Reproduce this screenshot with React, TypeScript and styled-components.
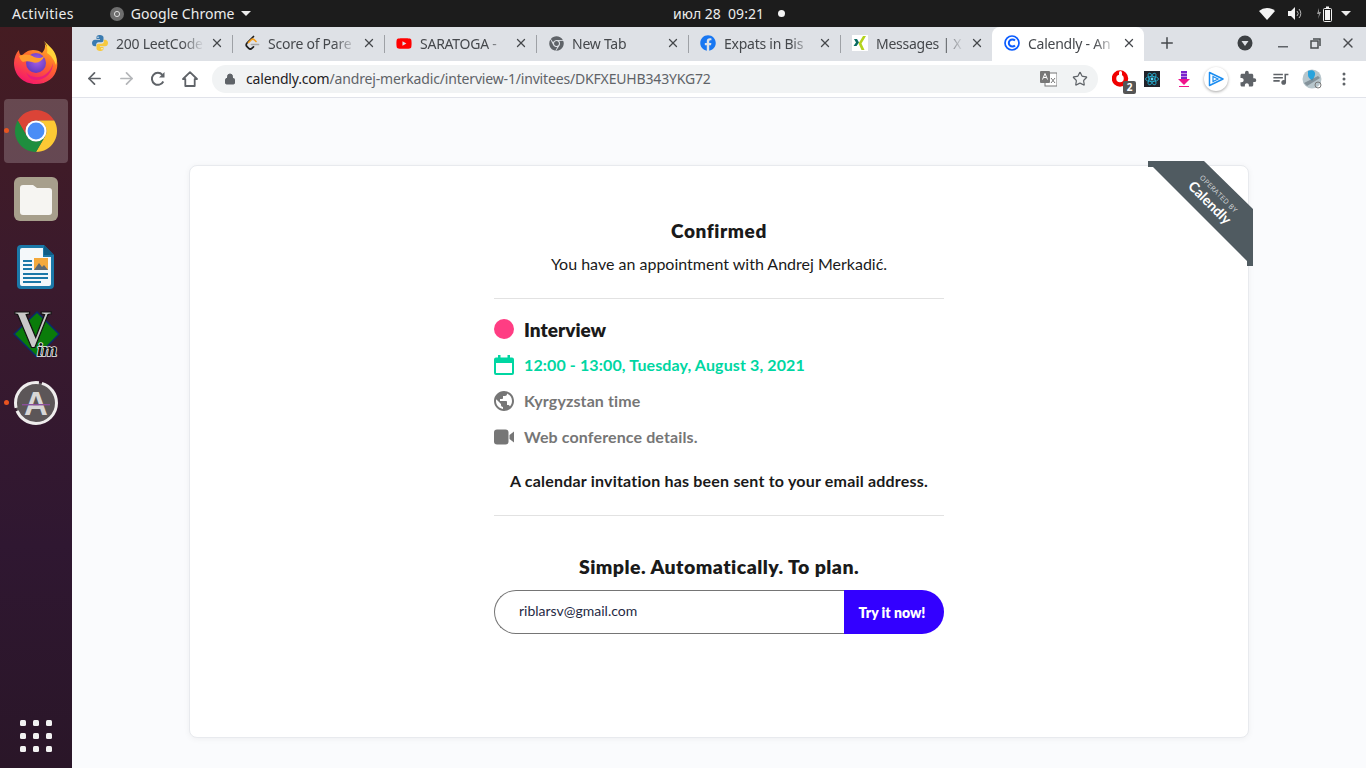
import styled, { createGlobalStyle } from "styled-components";
import { ArrowLeft, ArrowRight, Lock, Star, X, Plus } from "lucide-react";
import { FaFacebook, FaYoutube, FaChrome } from "react-icons/fa";
import { MdExtension, MdPublic, MdQueueMusic } from "react-icons/md";

const GlobalStyle = createGlobalStyle`
  html, body {
    margin: 0;
    padding: 0;
    height: 100%;
    overflow: hidden;
    background: #fafbfd;
  }
  * { box-sizing: border-box; }
`;

const Screen = styled.div`
  width: 1366px;
  height: 768px;
  display: flex;
  flex-direction: column;
  font-family: "Noto Sans", sans-serif;
`;

const TopBar = styled.div`
  height: 27px;
  flex: none;
  background: #1c1c1c;
  color: #ececec;
  font-size: 14px;
  display: grid;
  grid-template-columns: 1fr auto 1fr;
  align-items: center;
  padding: 0 15px 0 12px;
`;

const TopLeft = styled.div`
  display: flex;
  align-items: center;
  letter-spacing: 0.02px;
`;

const Activities = styled.span`
  letter-spacing: 0.35px;
`;

const AppMenu = styled.div`
  display: flex;
  align-items: center;
  gap: 7px;
  margin-left: 36px;
`;

const Caret = styled.span`
  width: 0;
  height: 0;
  border-left: 5px solid transparent;
  border-right: 5px solid transparent;
  border-top: 5px solid #ececec;
`;

const TrayCaret = styled(Caret)`
  margin-left: -5px;
`;

const Clock = styled.div`
  display: flex;
  align-items: center;
  gap: 14px;
  margin-left: 95px;
`;

const Dot = styled.span`
  width: 7px;
  height: 7px;
  border-radius: 50%;
  background: #f4f4f4;
`;

const Tray = styled.div`
  display: flex;
  align-items: center;
  justify-content: flex-end;
  gap: 13px;
`;

const Main = styled.div`
  flex: 1;
  display: flex;
  min-height: 0;
`;

const Dock = styled.div`
  width: 72px;
  flex: none;
  background: linear-gradient(180deg, #451c22 0%, #3a1a2d 35%, #2f1731 70%, #2a1628 100%);
  display: flex;
  flex-direction: column;
  padding-top: 2px;
`;

const DockSlot = styled.div<{ $active?: boolean; $running?: boolean; $lift?: boolean }>`
  height: 68px;
  flex: none;
  margin: 0 4px;
  border-radius: 4px;
  display: flex;
  align-items: center;
  justify-content: center;
  position: relative;
  background: ${(p) => (p.$active ? "rgba(255,255,255,0.2)" : "transparent")};
  ${(p) => (p.$active ? "height: 64px; margin: 2px 4px;" : "")}
  ${(p) => (p.$lift ? "padding-bottom: 2px;" : "")}
  &::before {
    content: "";
    display: ${(p) => (p.$running ? "block" : "none")};
    position: absolute;
    left: 0;
    top: 50%;
    margin-top: -3px;
    width: 5px;
    height: 5px;
    border-radius: 50%;
    background: #e95420;
  }
`;

const AppGrid = styled.div`
  margin: auto 0 16px 20px;
  width: 32px;
  display: grid;
  grid-template-columns: repeat(3, 6px);
  grid-auto-rows: 6px;
  gap: 7px;
`;

const GridDot = styled.span`
  background: #f2f2f2;
  border-radius: 1.5px;
`;

const Browser = styled.div`
  flex: 1;
  min-width: 0;
  display: flex;
  flex-direction: column;
`;

const TabStrip = styled.div`
  height: 34px;
  flex: none;
  background: #dee1e6;
  display: flex;
  align-items: stretch;
  padding-left: 8px;
  color: #45484c;
`;

const Tab = styled.div<{ $active?: boolean; $last?: boolean }>`
  width: 152px;
  flex: none;
  display: flex;
  align-items: center;
  padding: 0 8px 2px 12px;
  gap: 8px;
  font-size: 14px;
  position: relative;
  background: ${(p) => (p.$active ? "#fff" : "transparent")};
  border-radius: ${(p) => (p.$active ? "8px 8px 0 0" : "0")};
  &::after {
    content: "";
    display: ${(p) => (p.$active || p.$last ? "none" : "block")};
    position: absolute;
    right: -1px;
    top: 8px;
    bottom: 8px;
    width: 1px;
    background: #9ea1a6;
  }
`;

const TabIcon = styled.span`
  width: 16px;
  height: 16px;
  flex: none;
  display: flex;
  align-items: center;
  justify-content: center;
`;

const TabTitle = styled.span`
  flex: 1;
  min-width: 0;
  margin-right: -6px;
  white-space: nowrap;
  overflow: hidden;
  letter-spacing: -0.25px;
  mask-image: linear-gradient(90deg, #000 72%, transparent 96%);
`;

const NewTab = styled.span`
  width: 46px;
  flex: none;
  display: flex;
  align-items: center;
  justify-content: center;
  padding-bottom: 2px;
`;

const WindowControls = styled.div`
  margin-left: auto;
  display: flex;
  align-items: center;
  padding-bottom: 2px;
`;

const WindowButton = styled.span<{ $w: number }>`
  width: ${(p) => p.$w}px;
  display: flex;
  align-items: center;
  justify-content: center;
`;

const Toolbar = styled.div`
  height: 37px;
  flex: none;
  background: #fff;
  border-bottom: 1px solid #e1e3ea;
  display: flex;
  align-items: center;
  padding: 0 0 1px 6px;
  color: #5f6368;
`;

const NavButton = styled.span<{ $muted?: boolean }>`
  width: 32px;
  display: flex;
  align-items: center;
  justify-content: center;
  color: ${(p) => (p.$muted ? "#b4b6b9" : "#5f6368")};
`;

const Omnibox = styled.div`
  width: 886px;
  height: 28px;
  margin-left: 6px;
  border-radius: 14px;
  background: #f1f3f4;
  display: flex;
  align-items: center;
  padding: 0 2px 0 12px;
  font-size: 14px;
`;

const Url = styled.span`
  margin-left: 10px;
  flex: 1;
  color: #5f6368;
  letter-spacing: -0.17px;
  white-space: nowrap;
  strong {
    font-weight: 400;
    color: #1f2124;
  }
`;

const OmniAction = styled.span`
  width: 32px;
  display: flex;
  align-items: center;
  justify-content: center;
`;

const Extensions = styled.div`
  display: flex;
  align-items: center;
  margin-left: 6px;
`;

const Extension = styled.span`
  width: 32px;
  height: 28px;
  display: flex;
  align-items: center;
  justify-content: center;
  position: relative;
`;

const CountBadge = styled.span`
  position: absolute;
  right: 0;
  bottom: -1px;
  width: 13px;
  height: 13px;
  background: #555;
  border-radius: 2px;
  color: #fff;
  font-size: 10px;
  font-weight: 700;
  line-height: 13px;
  text-align: center;
`;

const Page = styled.div`
  flex: 1;
  min-height: 0;
  background: #fafbfd;
  padding: 67px 117px 0;
`;

const Card = styled.div`
  position: relative;
  height: 573px;
  background: #fff;
  border: 1px solid #e8eaee;
  border-radius: 8px;
  box-shadow: 0 1px 6px rgba(0, 0, 0, 0.05);
  padding-top: 53px;
  font-family: "Lato", sans-serif;
  color: #1a1a1a;
`;

const Ribbon = styled.div`
  position: absolute;
  top: -5px;
  right: -5px;
  width: 105px;
  height: 105px;
`;

const RibbonBand = styled.div`
  position: absolute;
  inset: 0;
  background: #505b61;
  clip-path: polygon(0 0, 56px 0, 105px 48px, 105px 105px, 99px 105px, 99px 100px, 5px 6px, 0 6px);
`;

const RibbonLabel = styled.div`
  position: absolute;
  left: 23px;
  top: 27px;
  width: 84px;
  color: #fff;
  transform: rotate(45deg);
  text-align: center;
  line-height: 1;
`;

const RibbonSmall = styled.div`
  font-size: 7px;
  letter-spacing: 0.4px;
  color: #d5d8da;
  font-family: "Open Sans", sans-serif;
  margin-bottom: 2px;
`;

const RibbonBrand = styled.div`
  font-size: 14px;
  font-weight: 700;
`;

const Column = styled.div`
  width: 450px;
  margin: 0 auto;
`;

const Title = styled.h1`
  margin: 0;
  font-size: 19px;
  font-weight: 800;
  line-height: 24px;
  letter-spacing: 0.6px;
  text-align: center;
  color: #1a1a1a;
`;

const Subtitle = styled.p`
  margin: 9px 0 22px;
  font-size: 16px;
  line-height: 24px;
  text-align: center;
`;

const Divider = styled.hr`
  margin: 0;
  border: 0;
  height: 1px;
  background: #e2e2e2;
`;

const Details = styled.div`
  padding-top: 13px;
`;

const DetailRow = styled.div<{ $color?: string; $big?: boolean }>`
  height: 36px;
  display: flex;
  align-items: center;
  gap: 10px;
  padding-bottom: 2px;
  font-size: ${(p) => (p.$big ? "19px" : "16px")};
  font-weight: ${(p) => (p.$big ? 800 : 700)};
  letter-spacing: ${(p) => (p.$big ? "0" : "0.12px")};
  color: ${(p) => p.$color || "#767676"};
  svg {
    flex: none;
  }
`;

const RowText = styled.span<{ $lift?: boolean }>`
  margin-top: ${(p) => (p.$lift ? "-2px" : "0")};
`;

const IconCell = styled.span`
  width: 20px;
  height: 20px;
  flex: none;
  display: flex;
  align-items: center;
  justify-content: center;
`;

const EventDot = styled.span`
  width: 20px;
  height: 20px;
  border-radius: 50%;
  background: #ff3d83;
`;

const Notice = styled.p`
  margin: 13px 0 22px;
  font-size: 16px;
  font-weight: 700;
  line-height: 24px;
  letter-spacing: 0.2px;
  text-align: center;
  color: #1a1a1a;
`;

const Promo = styled.h2`
  margin: 39px 0 11px;
  font-size: 19.5px;
  font-weight: 800;
  line-height: 24px;
  letter-spacing: 0.45px;
  text-align: center;
  color: #1a1a1a;
`;

const SignupForm = styled.form`
  height: 44px;
  display: flex;
`;

const EmailInput = styled.input`
  flex: 1;
  min-width: 0;
  border: 1px solid #757575;
  border-right: 0;
  border-radius: 22px 0 0 22px;
  padding: 0 0 4px 24px;
  font-family: "Lato", sans-serif;
  font-size: 14px;
  color: #1f2a44;
  outline: none;
`;

const TryButton = styled.button`
  width: 100px;
  border: 0;
  border-radius: 0 22px 22px 0;
  padding: 0 4px 0 0;
  background: #3300ff;
  color: #fff;
  font-family: "Lato", sans-serif;
  font-size: 14px;
  font-weight: 800;
`;

const Firefox = () => (
  <svg width="46" height="46" viewBox="0 0 46 46">
    <defs>
      <linearGradient id="ffBody" x1="0.8" y1="0" x2="0.3" y2="1">
        <stop offset="0" stopColor="#ffc328" />
        <stop offset="0.45" stopColor="#ff6a2b" />
        <stop offset="1" stopColor="#f5156c" />
      </linearGradient>
      <radialGradient id="ffEye" cx="0.55" cy="0.4" r="0.7">
        <stop offset="0" stopColor="#a560e8" />
        <stop offset="1" stopColor="#5a33b8" />
      </radialGradient>
    </defs>
    <path d="M31 2c1 5 6 8 9 12 4 5 5 10 4 15-2 10-10 16-21 16C10 45 1 36 1 24c0-5 2-10 5-13 0 3 1 5 3 6 2-3 6-6 11-6 4 0 7 1 9 3 3-3 4-7 2-12z" fill="url(#ffBody)" />
    <path d="M31 2c4 4 10 8 12 15 1 3 1 6 0 9-2-5-5-10-9-12 1-4 0-8-3-12z" fill="#ffd43a" />
    <circle cx="23" cy="24" r="10" fill="url(#ffEye)" />
    <path d="M6 17c5-2 10-2 15 1 4 2 8 1 10-1-1 5-7 8-12 6-3-1-7-1-9 0-2-1-3-3-4-6z" fill="#ff9c2e" />
    <path d="M13 33c4 6 14 7 20 2 4-3 6-7 7-11 0 9-7 17-17 17-5 0-8-3-10-8z" fill="#e31587" opacity="0.75" />
  </svg>
);

const ChromeLogo = () => (
  <svg width="46" height="46" viewBox="0 0 48 48">
    <path d="M5 13A22 22 0 0 1 43 13H24A11 11 0 0 0 14.5 29.5Z" fill="#db4437" />
    <path d="M43 13A22 22 0 0 1 24 46L33.5 29.5A11 11 0 0 0 24 13Z" fill="#fcc934" />
    <path d="M24 46A22 22 0 0 1 5 13L14.5 29.5A11 11 0 0 0 33.5 29.5Z" fill="#1e8e3e" />
    <circle cx="24" cy="24" r="11" fill="#fff" />
    <circle cx="24" cy="24" r="8.8" fill="#4a8df6" />
  </svg>
);

const FilesLogo = () => (
  <svg width="46" height="46" viewBox="0 0 46 46">
    <rect x="1" y="1" width="44" height="44" rx="6" fill="#a79f8c" />
    <path d="M7 12a3 3 0 0 1 3-3h10l4 3h12a3 3 0 0 1 3 3v21a3 3 0 0 1-3 3H10a3 3 0 0 1-3-3z" fill="#f6f5f2" />
  </svg>
);

const WriterLogo = () => (
  <svg width="38" height="46" viewBox="0 0 38 46">
    <path d="M4 1h23l10 10v30a4 4 0 0 1-4 4H4a4 4 0 0 1-4-4V5a4 4 0 0 1 4-4z" fill="#1b78a8" />
    <path d="M5 4h21v9h8v27a2 2 0 0 1-2 2H5a2 2 0 0 1-2-2V6a2 2 0 0 1 2-2z" fill="#f4f8fa" />
    <path d="M27 1l10 10H27z" fill="#0f5d86" />
    <rect x="6" y="16" width="9" height="2" fill="#1b78a8" />
    <rect x="6" y="20" width="9" height="2" fill="#1b78a8" />
    <rect x="6" y="24" width="9" height="2" fill="#1b78a8" />
    <rect x="6" y="29" width="25" height="2" fill="#1b78a8" />
    <rect x="6" y="33" width="25" height="2" fill="#1b78a8" />
    <rect x="6" y="37" width="18" height="2" fill="#1b78a8" />
    <rect x="17" y="14" width="14" height="12" fill="#f3a93c" />
    <path d="M17 26l5-7 3 4 2-2 4 5z" fill="#5d6a73" />
  </svg>
);

const VimLogo = () => (
  <svg width="48" height="48" viewBox="0 0 48 48" overflow="visible">
    <path d="M25 1l22 22-22 23L2 23z" fill="#0a7c0a" stroke="#0b2a6b" strokeWidth="1.5" />
    <text x="21" y="36" textAnchor="middle" fontFamily="Liberation Serif, serif" fontWeight="700" fontSize="52" fill="#c9c9c9" stroke="#111" strokeWidth="1.2">V</text>
    <text x="35" y="45" textAnchor="middle" fontFamily="Liberation Serif, serif" fontStyle="italic" fontWeight="700" fontSize="19" fill="#111" stroke="#eee" strokeWidth="1.6" paintOrder="stroke">im</text>
  </svg>
);

const SoftwareLogo = () => (
  <svg width="46" height="46" viewBox="0 0 46 46">
    <circle cx="23" cy="23" r="20.500" fill="#5c5658" />
    <circle cx="23" cy="23" r="20.500" fill="none" stroke="#efeded" strokeWidth="3" strokeDasharray="56 3 40 3 26 1" />
    <text x="23" y="35" textAnchor="middle" fontFamily="Liberation Sans, sans-serif" fontWeight="700" fontSize="33" fill="#d8d6d6">A</text>
    <rect x="9" y="24" width="28" height="1.400" fill="#8a4f9c" />
  </svg>
);

const CalendarIcon = () => (
  <svg width="20" height="20" viewBox="0 0 20 20">
    <path d="M4 0h2.500v2.500h7V0H16v2.500h2a2 2 0 0 1 2 2V18a2 2 0 0 1-2 2H2a2 2 0 0 1-2-2V4.500a2 2 0 0 1 2-2h2zM2 8v10h16V8z" fill="#00d6a2" />
  </svg>
);

const VideoIcon = () => (
  <svg width="20" height="16" viewBox="0 0 20 16">
    <rect x="0" y="0.500" width="14.500" height="15" rx="3" fill="#767676" />
    <path d="M15.500 6l4.500-3.500v11L15.500 10z" fill="#767676" />
  </svg>
);

const CalendlyFavicon = () => (
  <svg width="16" height="16" viewBox="0 0 16 16" fill="none">
    <circle cx="8" cy="8" r="7" stroke="#0a5cff" strokeWidth="1.700" />
    <path d="M11 5.500a3.600 3.600 0 1 0 0 5" stroke="#0a5cff" strokeWidth="2" />
  </svg>
);

const PythonFavicon = () => (
  <svg width="16" height="16" viewBox="0 0 16 16">
    <path d="M8 0C5 0 4.500 1.200 4.500 2.500V4H8v.7H3C1.200 4.700 0 6 0 8s1.200 3.300 3 3.300h1.200V9.500c0-1.300 1-2.300 2.300-2.300h3c1.200 0 2-.9 2-2V2.500C11.500 1 10 0 8 0z" fill="#3b7bb0" />
    <path d="M8 16c3 0 3.500-1.200 3.500-2.500V12H8v-.7h5c1.800 0 3-1.300 3-3.300s-1.200-3.300-3-3.300h-1.200v1.800c0 1.300-1 2.300-2.300 2.300h-3c-1.200 0-2 .9-2 2v2.700C4.500 15 6 16 8 16z" fill="#f7c93e" />
    <circle cx="6" cy="2.200" r="0.700" fill="#fff" />
    <circle cx="10" cy="13.800" r="0.700" fill="#fff" />
  </svg>
);

const LeetcodeFavicon = () => (
  <svg width="16" height="16" viewBox="0 0 16 16" fill="none" strokeWidth="1.700" strokeLinecap="round">
    <path d="M9.500 1.500L3 8c-1 1.200-1 2.600 0 3.600l1.500 1.500c1 1 2.600 1 3.600 0l1.400-1.300" stroke="#1f1f1f" />
    <path d="M4.500 7.500L7 5c1-1 2.500-1 3.500 0l1.500 1.500" stroke="#f89f1b" />
    <path d="M7.500 9.500h7" stroke="#a8a8a8" />
  </svg>
);

const XingFavicon = () => (
  <svg width="16" height="16" viewBox="0 0 16 16">
    <rect width="16" height="16" fill="#fff" />
    <path d="M2 4h3l2 3.500L4.500 11h-3L4 7.500z" fill="#0a6b62" />
    <path d="M11 1h3L9.500 8.500 12.500 15h-3L6.500 8.500z" fill="#b4d31e" />
  </svg>
);

const Wifi = () => (
  <svg width="16" height="13" viewBox="0 0 16 13">
    <path d="M0 4a12 12 0 0 1 16 0l-8 9z" fill="#f4f4f4" />
  </svg>
);

const Volume = () => (
  <svg width="15" height="13" viewBox="0 0 15 13" fill="none">
    <path d="M0 4h3l4-4v13l-4-4H0z" fill="#f4f4f4" />
    <path d="M9 4a3.500 3.500 0 0 1 0 5M11 2a6.500 6.500 0 0 1 0 9" stroke="#b8b8b8" />
  </svg>
);

const Battery = () => (
  <svg width="17" height="16" viewBox="0 0 17 16" fill="none">
    <path d="M3 2L1 8h2l-1 5 3-7H3z" fill="#999" />
    <rect x="7.500" y="2.500" width="8" height="13" rx="1" stroke="#f4f4f4" />
    <rect x="9" y="4" width="5" height="10" fill="#f4f4f4" />
    <rect x="10" y="0.500" width="3" height="2" fill="#f4f4f4" />
  </svg>
);

const Indicator = () => (
  <svg width="14" height="14" viewBox="0 0 14 14">
    <circle cx="7" cy="7" r="7" fill="#6e6e6e" />
    <circle cx="7" cy="7" r="2.600" fill="none" stroke="#dcdcdc" />
  </svg>
);

const ReloadIcon = () => (
  <svg width="18" height="18" viewBox="0 0 18 18" fill="none">
    <path d="M14.300 11.500A6 6 0 1 1 13.400 4.800" stroke="#5f6368" strokeWidth="2" />
    <path d="M15.500 2v5.500H10z" fill="#5f6368" />
  </svg>
);

const HomeIcon = () => (
  <svg width="18" height="18" viewBox="0 0 18 18" fill="none">
    <path d="M9 2.200L2 9h2.300v7h9.400V9H16z" stroke="#5f6368" strokeWidth="1.800" strokeLinejoin="round" />
  </svg>
);

const TranslateIcon = () => (
  <svg width="17" height="16" viewBox="0 0 17 16">
    <rect x="5" y="2" width="12" height="13" fill="#fff" stroke="#777" />
    <rect x="0" y="0" width="10" height="12" rx="1" fill="#777" />
    <path d="M2.500 8.500l2.500-6 2.500 6M3.500 6.500h3" stroke="#fff" fill="none" />
    <path d="M11 7l4 5M15 7l-4 5" stroke="#777" />
  </svg>
);

const DownloadIcon = () => (
  <svg width="12" height="16" viewBox="0 0 12 16">
    <rect x="3" y="0" width="6" height="9" fill="#7a22cc" />
    <rect x="3" y="2" width="6" height="1" fill="#fff" opacity="0.5" />
    <rect x="3" y="5" width="6" height="1" fill="#fff" opacity="0.5" />
    <path d="M0 8h12l-6 6z" fill="#f0148c" />
    <rect x="1" y="15" width="10" height="1" fill="#f0148c" />
  </svg>
);

const ReactIcon = () => (
  <svg width="16" height="16" viewBox="0 0 16 16" fill="none">
    <rect width="16" height="16" fill="#20232a" />
    <circle cx="8" cy="8" r="1.400" fill="#61dafb" />
    <g stroke="#25b4d8" strokeWidth="0.800">
      <ellipse cx="8" cy="8" rx="6.500" ry="2.600" />
      <ellipse cx="8" cy="8" rx="6.500" ry="2.600" transform="rotate(60 8 8)" />
      <ellipse cx="8" cy="8" rx="6.500" ry="2.600" transform="rotate(120 8 8)" />
    </g>
  </svg>
);

const PlayBubble = styled.span`
  width: 24px;
  height: 24px;
  border-radius: 50%;
  background: #fff;
  box-shadow: 0 1px 3px rgba(0, 0, 0, 0.35);
  display: flex;
  align-items: center;
  justify-content: center;
`;

const PlayIcon = () => (
  <svg width="16" height="16" viewBox="0 0 16 16" fill="none">
    <path d="M1.500 1.500L15 8 1.500 14.500z" stroke="#1a8cf0" strokeWidth="1.500" strokeLinejoin="round" />
    <path d="M5 5.500L10 8l-5 2.500z" stroke="#1a8cf0" strokeWidth="1.200" />
  </svg>
);

const OperaBlocker = () => (
  <svg width="17" height="17" viewBox="0 0 17 17">
    <circle cx="8" cy="8.500" r="6" fill="none" stroke="#f00000" strokeWidth="4.500" />
    <rect x="7" y="1" width="3" height="9" rx="1.500" fill="#fff" />
  </svg>
);

const GlobePin = () => (
  <svg width="20" height="20" viewBox="0 0 20 20">
    <circle cx="10" cy="10" r="9.500" fill="#b7c6cc" />
    <path d="M6 2c4-2 8 0 7 4-1 3-2 5-3 6-1-2-4-3-4-6z" fill="#29a3dc" />
    <path d="M2 14l14-7 2 2-13 8z" fill="#6d7c84" opacity="0.7" />
    <circle cx="16" cy="16" r="3" fill="none" stroke="#777" />
  </svg>
);

const tabs = [
  { title: "200 LeetCode", icon: <PythonFavicon /> },
  { title: "Score of Pare", icon: <LeetcodeFavicon /> },
  { title: "SARATOGA -", icon: <FaYoutube size={17} color="#f00" /> },
  { title: "New Tab", icon: <FaChrome size={15} color="#5f6368" /> },
  { title: "Expats in Bis", icon: <FaFacebook size={16} color="#1877f2" /> },
  { title: "Messages | X", icon: <XingFavicon /> },
];

const App = () => {
  return (
    <Screen>
      <GlobalStyle />
      <TopBar>
        <TopLeft>
          <Activities>Activities</Activities>
          <AppMenu>
            <Indicator />
            Google Chrome
            <Caret />
          </AppMenu>
        </TopLeft>
        <Clock>
          <span>июл 28&nbsp; 09:21</span>
          <Dot />
        </Clock>
        <Tray>
          <Wifi />
          <Volume />
          <Battery />
          <TrayCaret />
        </Tray>
      </TopBar>
      <Main>
        <Dock>
          <DockSlot $lift><Firefox /></DockSlot>
          <DockSlot $active $running><ChromeLogo /></DockSlot>
          <DockSlot><FilesLogo /></DockSlot>
          <DockSlot><WriterLogo /></DockSlot>
          <DockSlot><VimLogo /></DockSlot>
          <DockSlot $running><SoftwareLogo /></DockSlot>
          <AppGrid>
            {Array.from({ length: 9 }).map((_, i) => (
              <GridDot key={i} />
            ))}
          </AppGrid>
        </Dock>
        <Browser>
          <TabStrip>
            {tabs.map((t, i) => (
              <Tab key={t.title} $last={i === tabs.length - 1}>
                <TabIcon>{t.icon}</TabIcon>
                <TabTitle>{t.title}</TabTitle>
                <X size={14} strokeWidth={2.2} />
              </Tab>
            ))}
            <Tab $active>
              <TabIcon><CalendlyFavicon /></TabIcon>
              <TabTitle>Calendly - An</TabTitle>
              <X size={14} strokeWidth={2.2} />
            </Tab>
            <NewTab><Plus size={18} strokeWidth={2} /></NewTab>
            <WindowControls>
              <WindowButton $w={42}>
                <svg width="16" height="16" viewBox="0 0 16 16">
                  <circle cx="8" cy="8" r="7.500" fill="#3c4043" />
                  <path d="M4.500 6h7L8 11z" fill="#dee1e6" />
                </svg>
              </WindowButton>
              <WindowButton $w={34}>
                <svg width="10" height="10" viewBox="0 0 10 10"><rect y="8" width="10" height="1.500" fill="#5f6368" /></svg>
              </WindowButton>
              <WindowButton $w={30}>
                <svg width="11" height="11" viewBox="0 0 11 11" fill="none" stroke="#4a4d50" strokeWidth="1.500">
                  <rect x="1" y="3" width="7" height="7" />
                  <path d="M3 1h7v7" />
                </svg>
              </WindowButton>
              <WindowButton $w={36}><X size={16} strokeWidth={2} color="#4a4d50" /></WindowButton>
            </WindowControls>
          </TabStrip>
          <Toolbar>
            <NavButton><ArrowLeft size={19} strokeWidth={2.2} /></NavButton>
            <NavButton $muted><ArrowRight size={19} strokeWidth={2.2} /></NavButton>
            <NavButton><ReloadIcon /></NavButton>
            <NavButton><HomeIcon /></NavButton>
            <Omnibox>
              <Lock size={12} fill="#5f6368" />
              <Url><strong>calendly.com</strong>/andrej-merkadic/interview-1/invitees/DKFXEUHB343YKG72</Url>
              <OmniAction><TranslateIcon /></OmniAction>
              <OmniAction><Star size={16} strokeWidth={1.8} /></OmniAction>
            </Omnibox>
            <Extensions>
              <Extension><OperaBlocker /><CountBadge>2</CountBadge></Extension>
              <Extension><ReactIcon /></Extension>
              <Extension><DownloadIcon /></Extension>
              <Extension><PlayBubble><PlayIcon /></PlayBubble></Extension>
              <Extension><MdExtension size={18} /></Extension>
              <Extension><MdQueueMusic size={19} /></Extension>
              <Extension><GlobePin /></Extension>
              <Extension>
                <svg width="4" height="14" viewBox="0 0 4 14" fill="#5f6368">
                  <circle cx="2" cy="2" r="1.500" /><circle cx="2" cy="7" r="1.500" /><circle cx="2" cy="12" r="1.500" />
                </svg>
              </Extension>
            </Extensions>
          </Toolbar>
          <Page>
            <Card>
              <Ribbon>
                <RibbonBand />
                <RibbonLabel>
                  <RibbonSmall>OPERATED BY</RibbonSmall>
                  <RibbonBrand>Calendly</RibbonBrand>
                </RibbonLabel>
              </Ribbon>
              <Column>
                <Title>Confirmed</Title>
                <Subtitle>You have an appointment with Andrej Merkadić.</Subtitle>
                <Divider />
                <Details>
                  <DetailRow $big $color="#1a1a1a">
                    <IconCell><EventDot /></IconCell>
                    <RowText>Interview</RowText>
                  </DetailRow>
                  <DetailRow $color="#00d6a2">
                    <IconCell><CalendarIcon /></IconCell>
                    <RowText $lift>12:00 - 13:00, Tuesday, August 3, 2021</RowText>
                  </DetailRow>
                  <DetailRow>
                    <IconCell><MdPublic size={24} /></IconCell>
                    <RowText $lift>Kyrgyzstan time</RowText>
                  </DetailRow>
                  <DetailRow>
                    <IconCell><VideoIcon /></IconCell>
                    <RowText $lift>Web conference details.</RowText>
                  </DetailRow>
                </Details>
                <Notice>A calendar invitation has been sent to your email address.</Notice>
                <Divider />
                <Promo>Simple. Automatically. To plan.</Promo>
                <SignupForm>
                  <EmailInput defaultValue="riblarsv@gmail.com" />
                  <TryButton type="button">Try it now!</TryButton>
                </SignupForm>
              </Column>
            </Card>
          </Page>
        </Browser>
      </Main>
    </Screen>
  );
};

export default App;
